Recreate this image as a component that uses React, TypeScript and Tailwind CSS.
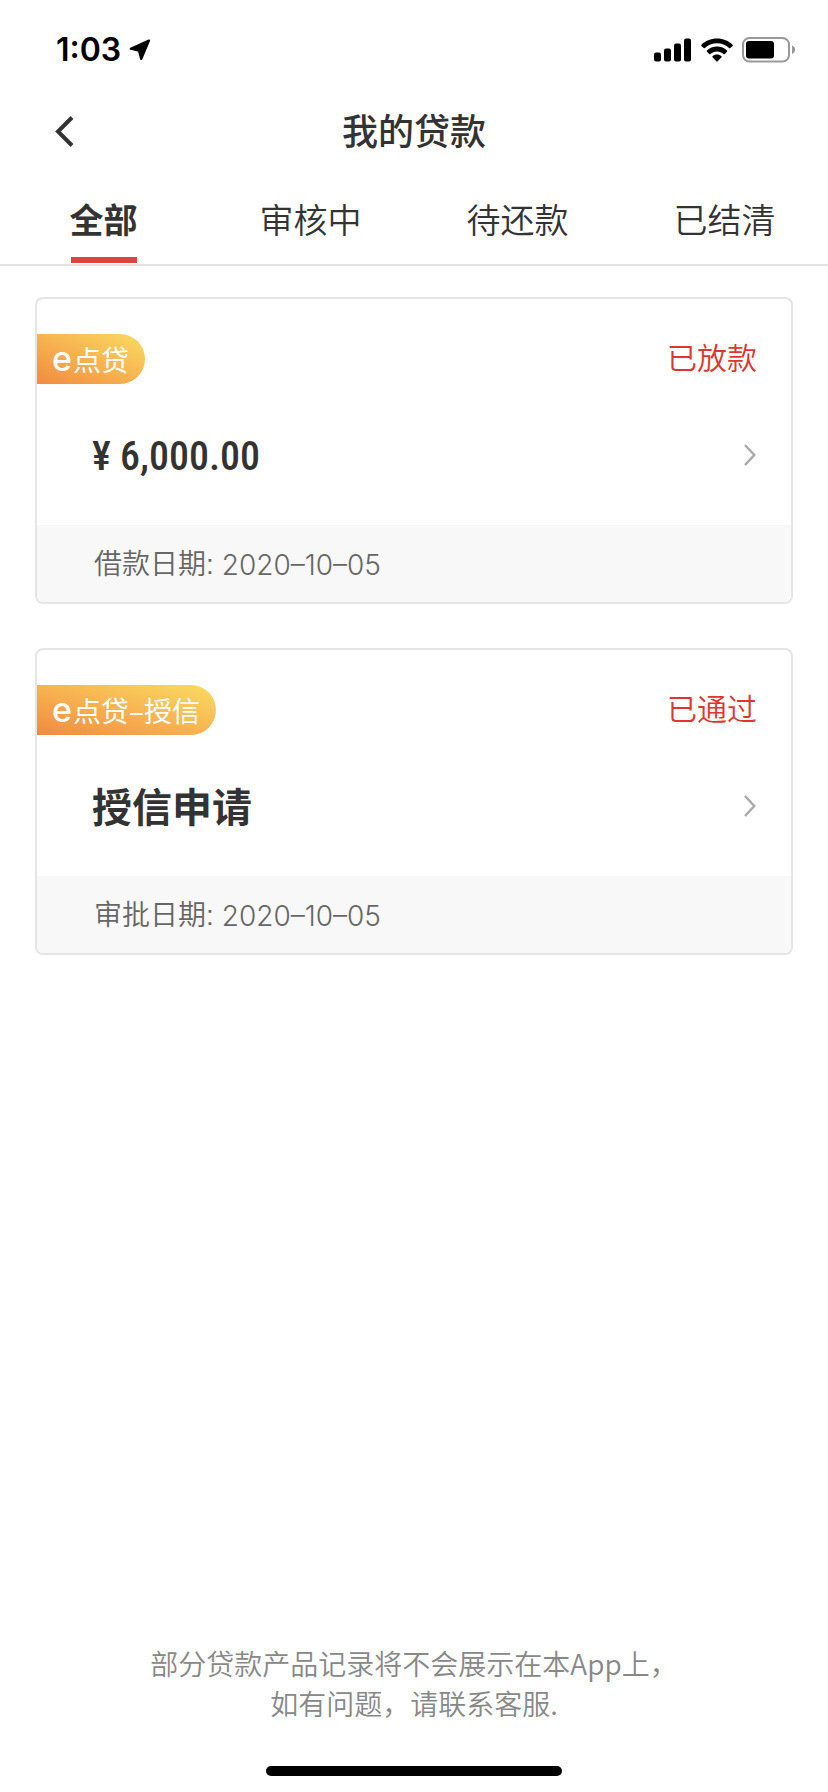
import { useState } from "react";

interface Loan {
  id: number;
  tag: string;
  status: string;
  title: string;
  isAmount: boolean;
  dateLabel: string;
  date: string;
}

const tabs = ["全部", "审核中", "待还款", "已结清"];

const loans: Loan[] = [
  {
    id: 1,
    tag: "点贷",
    status: "已放款",
    title: "¥ 6,000.00",
    isAmount: true,
    dateLabel: "借款日期:",
    date: "2020–10–05",
  },
  {
    id: 2,
    tag: "点贷–授信",
    status: "已通过",
    title: "授信申请",
    isAmount: false,
    dateLabel: "审批日期:",
    date: "2020–10–05",
  },
];

function StatusBar() {
  return (
    <div className="flex h-[87px] items-center justify-between pt-3 pr-8 pl-14 text-black">
      <div className="flex items-center gap-2">
        <span className="font-['Inter',sans-serif] text-[32px] leading-10 font-semibold">
          1:03
        </span>
        <svg width="22" height="22" viewBox="0 0 22 22" fill="currentColor">
          <path
            d="M20 1.500 1.800 9.800l8.200 1.800 2.200 8.400z"
            stroke="currentColor"
            strokeWidth="2.200"
            strokeLinejoin="round"
          />
        </svg>
      </div>
      <div className="flex items-center gap-[9px]">
        <svg width="38" height="24" viewBox="0 0 38 24" fill="currentColor">
          <rect x="0" y="14.500" width="7" height="9" rx="2" />
          <rect x="10" y="10.500" width="7" height="13" rx="2" />
          <rect x="20" y="5.500" width="7" height="18" rx="2" />
          <rect x="30" y="0.500" width="7" height="23" rx="2" />
        </svg>
        <svg width="32" height="24" viewBox="0 0 32 24" fill="currentColor">
          <path d="M16 .5C9.800.5 4.200 2.900.4 6.700c-.4.400-.4.900 0 1.200l2.300 2.200c.3.300.8.300 1.200 0C7 7.100 11.300 5.300 16 5.300s9 1.800 12.100 4.800c.4.300.9.300 1.200 0l2.300-2.200c.4-.3.4-.8 0-1.200C27.800 2.900 22.200.5 16 .5z" />
          <path d="M16 8.600c-3.900 0-7.400 1.500-10 3.900-.4.400-.4.900 0 1.200l2.200 2.200c.4.400.9.400 1.300 0 1.700-1.500 4-2.500 6.500-2.500s4.800 1 6.500 2.500c.4.400.9.400 1.300 0l2.200-2.200c.4-.3.4-.8 0-1.200-2.600-2.400-6.100-3.900-10-3.900z" />
          <path d="M16 16.600c-1.700 0-3.300.6-4.500 1.700-.3.300-.3.700 0 1l3.900 3.900c.4.300.8.300 1.200 0l3.900-3.900c.3-.3.300-.7 0-1-1.200-1.100-2.800-1.700-4.500-1.700z" />
        </svg>
        <svg width="54" height="26" viewBox="0 0 54 26">
          <rect x="1" y="1" width="46" height="23.500" rx="6.500" fill="none" stroke="#999" strokeWidth="2" />
          <rect x="4" y="4" width="28" height="17.500" rx="3" fill="currentColor" />
          <path d="M50 8.500c2 .8 3.200 2.400 3.200 4.250s-1.200 3.450-3.200 4.250z" fill="#999" />
        </svg>
      </div>
    </div>
  );
}

function NavBar() {
  return (
    <header className="grid h-[88px] grid-cols-[1fr_auto_1fr] items-center px-[54px]">
      <button type="button" aria-label="返回" className="justify-self-start">
        <svg width="22" height="32" viewBox="0 0 22 32" fill="none" stroke="#333" strokeWidth="4">
          <path d="M18 2.500 4 16.500 18 30.500" />
        </svg>
      </button>
      <h1 className="pt-1 text-4xl font-medium">我的贷款</h1>
    </header>
  );
}

function LoanCard({ tag, status, title, isAmount, dateLabel, date }: Loan) {
  return (
    <article className="overflow-hidden rounded-lg border-2 border-[#e5e5e5] bg-white">
      <div className="flex items-center justify-between pt-[35px] pr-[34px]">
        <div className="flex h-[50px] items-center gap-px rounded-r-full bg-linear-to-tr from-[#f18a40] to-[#f9dc62] pr-4 pl-[15px] text-white">
          <span className="font-['Inter',sans-serif] text-[34px] leading-[50px] font-medium">e</span>
          <span className="font-['Noto_Sans_CJK_SC',sans-serif] text-[28px] leading-[50px]">{tag}</span>
        </div>
        <span className="text-[30px] leading-[50px] font-[350] text-[#e0352f]">{status}</span>
      </div>
      <a href="#" className="flex h-[141px] items-center justify-between pr-[35px] pl-[55px]">
        {isAmount ? (
          <span className="pt-1 font-['Roboto_Condensed','Roboto',sans-serif] text-[40px] leading-[56px] font-medium">
            {title}
          </span>
        ) : (
          <span className="pt-1 text-[40px] leading-[56px] font-bold">{title}</span>
        )}
        <svg width="13" height="24" viewBox="0 0 13 24" fill="none" stroke="#aaa" strokeWidth="2.400">
          <path d="M2 2 11.300 12 2 22" />
        </svg>
      </a>
      <p className="flex h-[77px] items-center gap-2 bg-[#f8f8f8] pt-0.5 pl-[57px] text-[28px] text-[#666]">
        <span className="font-[350]">{dateLabel}</span>
        <span className="font-['Inter',sans-serif] font-light">{date}</span>
      </p>
    </article>
  );
}

export default function App() {
  const [active, setActive] = useState(tabs[0]);

  return (
    <div className="flex min-h-screen flex-col bg-white font-['Liberation_Sans','Noto_Sans_CJK_SC',sans-serif] text-[#333]">
      <StatusBar />
      <NavBar />
      <nav className="grid h-[91px] grid-cols-4 border-b-2 border-[#e3e3e3]">
        {tabs.map((tab) => (
          <button
            key={tab}
            type="button"
            onClick={() => setActive(tab)}
            className="flex flex-col items-center justify-between pt-[21px]"
          >
            <span className={`text-[34px] leading-[50px] ${tab === active ? "font-bold" : "font-[350]"}`}>
              {tab}
            </span>
            {tab === active && <span className="mb-px h-1.5 w-[66px] bg-[#dc453c]" />}
          </button>
        ))}
      </nav>
      <main className="flex flex-1 flex-col gap-11 px-[35px] pt-[31px]">
        {loans.map((loan) => (
          <LoanCard key={loan.id} {...loan} />
        ))}
      </main>
      <footer className="flex flex-col items-center pb-4">
        <p className="text-center font-['Noto_Sans_CJK_SC',sans-serif] text-[28px] leading-10 font-[350] text-[#888]">
          部分贷款产品记录将不会展示在本App上，
          <br />
          如有问题，请联系客服.
        </p>
        <div className="mt-[43px] h-2.5 w-[296px] rounded-full bg-black" />
      </footer>
    </div>
  );
}
